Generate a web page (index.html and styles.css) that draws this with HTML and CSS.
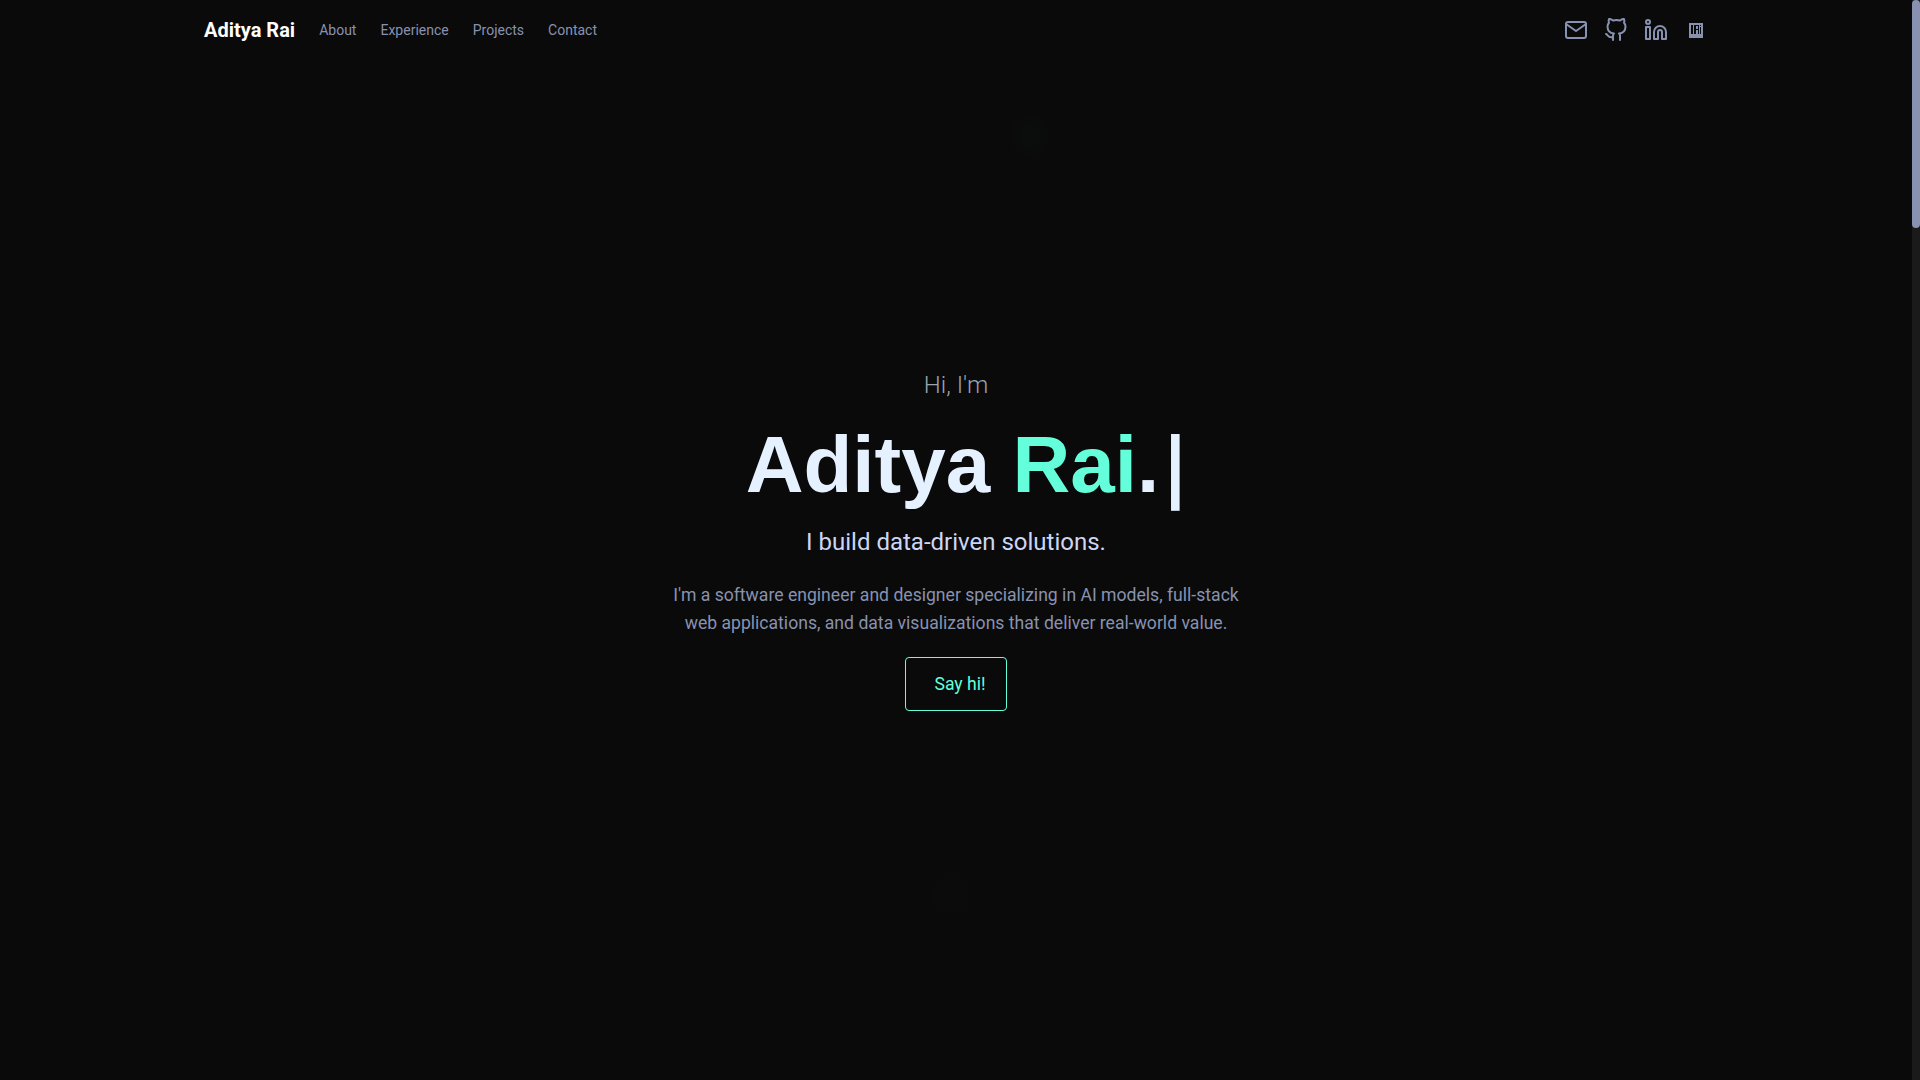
FILE: index.html
```html
<!DOCTYPE html>
<html lang="en">
<head>
    <meta charset="UTF-8">
    <title>Aditya Rai</title>
    <meta name="viewport" content="width=device-width, initial-scale=1.0">
    <link rel="stylesheet" href="styles.css">
</head>
<body>

    <header class="site-header">
        <div class="header-inner">
            <nav class="main-nav">
                <a href="#top" class="brand">Aditya Rai</a>
                <a href="#about" class="nav-link">About</a>
                <a href="#experience" class="nav-link">Experience</a>
                <a href="#projects" class="nav-link">Projects</a>
                <a href="#contact" class="nav-link">Contact</a>
            </nav>

            <div class="social-links">
                <a href="#contact" class="social-link" aria-label="Email">
                    <svg class="icon" viewBox="0 0 24 24"><path d="M4 4h16c1.100 0 2 .9 2 2v12c0 1.100-.9 2-2 2H4c-1.100 0-2-.9-2-2V6c0-1.100.9-2 2-2z"/><polyline points="22,6 12,13 2,6"/></svg>
                </a>
                <a href="#" class="social-link" aria-label="GitHub">
                    <svg class="icon" viewBox="0 0 24 24"><path d="M9 19c-5 1.500-5-2.500-7-3m14 6v-3.870a3.370 3.370 0 0 0-.94-2.610c3.140-.35 6.440-1.540 6.440-7A5.440 5.440 0 0 0 20 4.770 5.070 5.070 0 0 0 19.910 1S18.730.65 16 2.480a13.380 13.380 0 0 0-7 0C6.270.65 5.090 1 5.090 1A5.070 5.070 0 0 0 5 4.770a5.440 5.440 0 0 0-1.500 3.780c0 5.420 3.300 6.610 6.440 7A3.370 3.370 0 0 0 9 18.130V22"/></svg>
                </a>
                <a href="#" class="social-link" aria-label="LinkedIn">
                    <svg class="icon" viewBox="0 0 24 24"><path d="M16 8a6 6 0 0 1 6 6v7h-4v-7a2 2 0 0 0-2-2 2 2 0 0 0-2 2v7h-4v-7a6 6 0 0 1 6-6z"/><rect x="2" y="9" width="4" height="12"/><circle cx="4" cy="4" r="2"/></svg>
                </a>
                <a href="#" class="social-link" aria-label="Resume">
                    <svg class="icon-small" viewBox="0 0 14 15"><path class="solid" fill-rule="evenodd" d="M0 0h14v15H0zM2 2v9h2V2zM5 2v9h2V7h2v4h1V6H7V3h2v3h1V2zM11 2v1h1V2zM11 4v7h1V4z"/></svg>
                </a>
            </div>
        </div>
    </header>

    <main id="top">
        <section class="hero">
            <p class="hero-hello">Hi, I'm</p>
            <h1 class="hero-name">Aditya <span class="accent">Rai</span>.<span class="cursor">|</span></h1>
            <h2 class="hero-tagline">I build data-driven solutions.</h2>
            <p class="hero-text">I'm a software engineer and designer specializing in AI models, full-stack web applications, and data visualizations that deliver real-world value.</p>
            <a href="#contact" class="say-hi">Say hi!</a>
        </section>
    </main>

    <!-- Scrollbar drawn by hand, the browser hides its own when headless -->
    <div class="scroll-track">
        <div class="scroll-thumb"></div>
    </div>

</body>
</html>
```

FILE: styles.css
```css
* {
    box-sizing: border-box;
}

html,
body {
    height: 100%;
    overflow: hidden;
}

body {
    margin: 0;
    padding-right: 8px;
    font-family: Roboto, "Liberation Sans", sans-serif;
    color: #8892b0;
    background-color: #0a0a0a;
}

a {
    text-decoration: none;
}

.scroll-track {
    position: fixed;
    top: 0;
    right: 0;
    width: 8px;
    height: 100vh;
    background-color: #1a1a1a;
}

.scroll-thumb {
    height: 228px;
    background-color: #8892b0;
    border-radius: 4px;
}

/* Header */
.site-header {
    height: 0;
}

.header-inner {
    max-width: 1536px;
    margin: 0 auto;
    padding: 0 16px;
    height: 60px;
    display: flex;
    justify-content: space-between;
    align-items: center;
}

.main-nav {
    display: flex;
    align-items: center;
    gap: 24px;
}

.brand {
    font-size: 20px;
    font-weight: 700;
    color: #ffffff;
}

.nav-link {
    font-size: 14px;
    color: #8892b0;
}

.social-links {
    display: flex;
    align-items: center;
    gap: 16px;
}

.social-link {
    display: flex;
    align-items: center;
    justify-content: center;
    width: 24px;
    height: 24px;
}

.icon {
    width: 24px;
    height: 24px;
    fill: none;
    stroke: #8892b0;
    stroke-width: 2;
    stroke-linecap: round;
    stroke-linejoin: round;
}

.icon-small {
    width: 14px;
    height: 15px;
}

.solid {
    fill: #8892b0;
}

/* Hero */
.hero {
    min-height: 100vh;
    display: flex;
    flex-direction: column;
    justify-content: center;
    align-items: center;
    text-align: center;
    background-image:
        radial-gradient(circle at 1030px 136px, rgba(100, 255, 218, 0.012), transparent 24px),
        radial-gradient(circle at 950px 895px, rgba(136, 146, 176, 0.012), transparent 24px);
}

.hero-hello {
    margin: 0 0 16px;
    font-size: 24px;
    font-weight: 300;
    line-height: 32px;
    color: #9ca3af;
}

.hero-name {
    margin: 0 0 12px;
    font-family: "Liberation Sans", Arial, sans-serif;
    font-size: 80px;
    font-weight: 700;
    line-height: 96px;
    white-space: nowrap;
    color: #e6f1ff;
}

.accent {
    color: #64ffda;
}

.cursor {
    margin: 0 -23px 0 2px;
    font-family: "DejaVu Sans", sans-serif;
    font-size: 77px;
    font-weight: 700;
}

.hero-tagline {
    margin: 0 0 23px;
    font-size: 24px;
    font-weight: 400;
    line-height: 32px;
    color: #ccd6f6;
}

.hero-text {
    width: 576px;
    margin: 0 0 20px;
    font-size: 17.6px;
    line-height: 28px;
    color: #8892b0;
}

.say-hi {
    padding: 16px 20px 16px 28px;
    border: 1px solid #64ffda;
    border-radius: 4px;
    font-size: 17.6px;
    line-height: 20px;
    color: #64ffda;
}
```
